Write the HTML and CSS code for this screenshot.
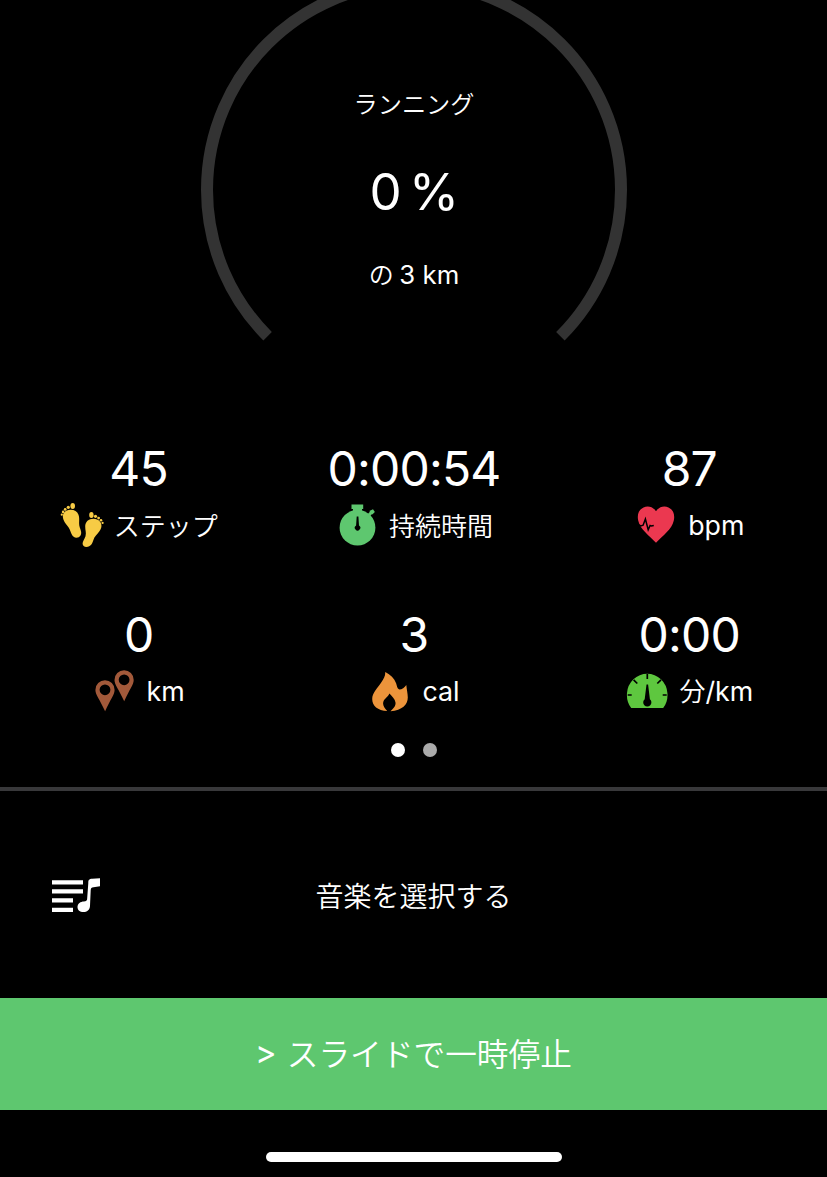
FILE: index.html
```html
<!DOCTYPE html>
<html lang="ja">
<head>
<meta charset="utf-8">
<title>ランニング</title>
<link rel="stylesheet" href="styles.css">
</head>
<body>
<main class="screen">
  <section class="goal">
    <svg class="goal-ring" viewBox="0 0 827 387"><path d="M267.6 336.2A207 207 0 1 1 560.4 336.2" fill="none" stroke="#333" stroke-width="12"/></svg>
    <div class="goal-text">
      <div class="goal-name">ランニング</div>
      <div class="goal-percent">0 %</div>
      <div class="goal-target">の <span class="latin">3 km</span></div>
    </div>
  </section>
  <section class="stats">
    <div class="stat">
      <div class="value">45</div>
      <div class="label">
        <svg class="icon" viewBox="0 0 44 44" fill="#f7cb45"><path d="M10.500 6.800C5 7 2.200 10.500 3 15c.8 4.500 4.500 7 6.500 11 1.800 4 2.500 8.500 7 8.700 3.500 0 5.300-3.200 4.500-6.500-.8-3-2-5-1.900-8.200.1-3 .4-5.500-.6-8.300-1.200-3.500-4.500-5-8-4.900z"/><ellipse cx="12.700" cy="3" rx="2.300" ry="2.900"/><circle cx="8.300" cy="4.300" r="1.600"/><circle cx="5.200" cy="6.400" r="1.400"/><circle cx="3.100" cy="8.900" r="1.300"/><circle cx="1.800" cy="11.700" r="1.100"/><path d="M33.500 15.800c-5 .1-8.100 3-8.300 7.500-.1 4 1.300 6 .3 10-.9 3-3 5-2.900 7.500.1 2 1.500 3.200 3.800 3.200 4.500-.2 5.900-3.500 7-7 1-3.700 3.800-5.500 6-8.700 2.500-3.500 2.800-7 .5-9.800-1.600-1.900-3.900-2.700-6.400-2.700z"/><ellipse cx="31.400" cy="12" rx="2.200" ry="2.900"/><circle cx="35.500" cy="13.300" r="1.600"/><circle cx="38.600" cy="15.100" r="1.400"/><circle cx="41" cy="17.300" r="1.300"/><circle cx="42.600" cy="19.900" r="1.100"/></svg>
        <span class="unit">ステップ</span>
      </div>
    </div>
    <div class="stat">
      <div class="value">0:00:54</div>
      <div class="label">
        <svg class="icon" viewBox="-.5 0 44 44"><circle cx="22" cy="24.700" r="17.900" fill="#5ec76f"/><path d="M16 1.500h11.700V6H26.500v3h-9V6H16z" fill="#5ec76f"/><path d="M31.500 14l4.500-4.600" stroke="#5ec76f" stroke-width="3"/><path d="M33.800 7.900l3 3.500 2.600-2.500-1.900-2.700z" fill="#5ec76f"/><path d="M21.200 13.500h1.700l.6 9a2.700 2.700 0 1 1-2.900 0z"/></svg>
        <span class="unit">持続時間</span>
      </div>
    </div>
    <div class="stat">
      <div class="value">87</div>
      <div class="label">
        <svg class="icon" viewBox="0 0 44 44"><path d="M22 8.200C18.500 3.200 13.500 2.600 9.500 4.400 4.500 6.700 3 12 4.200 17.500c2 9 10.500 14.500 17.800 22.200C29.300 32 37.800 26.500 39.800 17.500 41 12 39.500 6.700 34.500 4.400 30.500 2.600 25.500 3.200 22 8.200z" fill="#eb3850"/><path d="M4 21.500l2.800 1.400 2.300-.7 2.300-6.200 2.800 10.800 1.900-4.300 1.100.5 2.600-.6" fill="none" stroke="#000" stroke-width="1.500"/></svg>
        <span class="latin">bpm</span>
      </div>
    </div>
    <div class="stat">
      <div class="value">0</div>
      <div class="label">
        <svg class="icon" viewBox="-.5 0 44 44" fill="#a2593a" fill-rule="evenodd"><path d="M11.500 11.200a9.600 9.600 0 0 0-9.600 9.700c0 4.800 4.400 9.300 9.700 21.400C16.800 30.200 21.100 25.700 21.100 20.900a9.600 9.600 0 0 0-9.600-9.700zm0 4.200a5.400 5.400 0 1 1 0 10.800 5.400 5.400 0 0 1 0-10.800z"/><path d="M30.600 1.200A9.600 9.600 0 0 0 21 10.900c0 4.800 4.400 9.300 9.700 21.400C35.900 20.200 40.200 15.700 40.200 10.900a9.600 9.600 0 0 0-9.600-9.700zm0 4.200a5.400 5.400 0 1 1 0 10.800 5.400 5.400 0 0 1 0-10.800z"/></svg>
        <span class="latin">km</span>
      </div>
    </div>
    <div class="stat">
      <div class="value">3</div>
      <div class="label">
        <svg class="icon" viewBox="0 0 44 44"><path d="M17.300 3c5.200 2.500 9 6.500 10.800 11.300.8 2.400 1 5.200 3.200 6.200 2.700 0 5.300-1.800 7-4.500.4 4.500 1.500 8.500 1.500 12.500 0 7-5.500 12.800-17.300 13.800 2.500-2.600 5.500-5 5-8.800-.4-3.500-3.700-6.300-6.100-9-1.200 3.800-6.400 5.300-6.300 10.300.1 3 2.400 5.200 4.200 7.200C9.500 41.500 4.300 37 4.200 30c0-6 5-10.500 9-16.500 2.300-3.600 4.200-6.200 4.100-10.500z" fill="#ec943b"/></svg>
        <span class="latin">cal</span>
      </div>
    </div>
    <div class="stat">
      <div class="value">0:00</div>
      <div class="label">
        <svg class="icon" viewBox="0 0 44 44"><path d="M6.200 39A20.300 21.200 0 1 1 38.200 39z" fill="#5ec73f"/><path d="M22.300 5v5M2.700 26h4M37.700 26h4M8.600 10.900l3.700 3.600M36 10.900l-3.700 3.600" stroke="#000" stroke-width="1.700"/><path d="M21.500 15.500h1.600l1.800 14.700a4.100 4.100 0 1 1-5.200 0z"/></svg>
        <span class="unit">分<span class="latin">/km</span></span>
      </div>
    </div>
  </section>
  <div class="pager"><i class="dot dot-active"></i><i class="dot"></i></div>
  <section class="music">
    <svg class="music-icon" viewBox="0 0 48 36" fill="#fff"><path d="M0 2.200h31v4.300H0zM0 11.300h31v4.300H0zM0 20.300h21v4.300H0zM0 29.700h21v4.300H0z"/><path d="M36.300 5c0-3 .8-4 3.800-4.200L48 .2v8.100l-6.500.9c-2 .3-2.700 1-2.800 3l-.7 15.900c-.3 4-3 6-6.500 6-3.700 0-6-2-6-5 0-3.600 3-5.700 6.500-5.700 1.700 0 2.700-.4 3.100-1.800z"/></svg>
    <div class="music-title">音楽を選択する</div>
  </section>
  <div class="pause"><span class="latin">&gt;</span> スライドで一時停止</div>
  <footer class="home"><div class="home-bar"></div></footer>
</main>
</body>
</html>
```
FILE: styles.css
```css
* { box-sizing: border-box; }

body {
  margin: 0;
  background: #000;
  color: #fff;
  font-family: "Noto Sans CJK JP", sans-serif;
  font-weight: 350;
}

.screen {
  width: 827px;
  height: 1177px;
  display: flex;
  flex-direction: column;
  overflow: hidden;
}

.latin {
  font-family: Inter, "Liberation Sans", sans-serif;
  font-size: 1.03em;
  font-weight: 400;
}

.goal {
  display: grid;
  height: 387px;
  flex: none;
}

.goal-ring {
  grid-area: 1 / 1;
  width: 827px;
  height: 387px;
}

.goal-text {
  grid-area: 1 / 1;
  display: grid;
  grid-template-rows: 30px 144px 30px;
  align-content: start;
  align-items: center;
  justify-items: center;
  padding: 88px 0 0 1px;
  line-height: 30px;
}

.goal-name { font-size: 24.2px; }

.goal-percent {
  font-family: Inter, sans-serif;
  font-weight: 400;
  font-size: 51px;
  letter-spacing: -0.5px;
  word-spacing: -6px;
  padding-top: 3px;
}

.goal-target {
  font-size: 25px;
  padding-bottom: 6px;
}

.stats {
  display: grid;
  grid-template-columns: repeat(3, 1fr);
  grid-auto-rows: 166px;
  padding: 51px 0 0 1px;
  height: 353px;
  flex: none;
}

.stat {
  display: flex;
  flex-direction: column;
  align-items: center;
}

.value {
  font-family: Inter, sans-serif;
  font-weight: 400;
  font-size: 48px;
  letter-spacing: -0.8px;
  line-height: 62px;
  height: 65px;
}

.label {
  display: flex;
  align-items: center;
  gap: 10px;
  height: 44px;
  font-size: 26px;
  line-height: 44px;
  white-space: nowrap;
}

.unit { padding-bottom: 1px; }

.icon {
  width: 44px;
  height: 44px;
  flex: none;
}

.pager {
  display: flex;
  justify-content: center;
  gap: 18px;
  padding-top: 3px;
  height: 47px;
  flex: none;
}

.dot {
  width: 14px;
  height: 14px;
  border-radius: 50%;
  background: #aaa;
}

.dot-active { background: #fff; }

.music {
  display: grid;
  grid-template-columns: 48px 1fr 48px;
  align-items: center;
  height: 211px;
  flex: none;
  padding: 2px 52px 0;
  border-top: 4px solid #38383a;
}

.music-icon {
  width: 48px;
  height: 36px;
}

.music-title {
  font-size: 28px;
  text-align: center;
  padding-bottom: 2px;
}

.pause {
  display: flex;
  align-items: center;
  justify-content: center;
  gap: 10px;
  height: 112px;
  flex: none;
  padding-bottom: 4px;
  background: #5ec76f;
  font-size: 31.7px;
}

.home {
  display: flex;
  justify-content: center;
  padding-top: 42px;
}

.home-bar {
  width: 296px;
  height: 10px;
  border-radius: 5px;
  background: #fff;
}
```
